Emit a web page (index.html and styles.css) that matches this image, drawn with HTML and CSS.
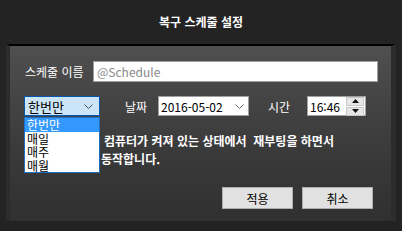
FILE: index.html
```html
<!DOCTYPE html>
<html lang="ko">
<head>
  <meta charset="UTF-8">
  <title>복구 스케줄 설정</title>
  <link rel="stylesheet" href="styles.css">
</head>
<body>
  <div class="window">
    <div class="title">복구 스케줄 설정</div>

    <div class="panel">
      <div class="row name-row">
        <label class="name-label">스케줄 이름</label>
        <div class="text-input">@Schedule</div>
      </div>

      <div class="row when-row">
        <div class="select">
          <span>한번만</span>
          <svg class="chev" width="9" height="5" viewBox="0 0 9 5"><path d="M0.5 0.5 L4.5 4.5 L8.5 0.5" fill="none" stroke="#555" stroke-width="1"/></svg>
        </div>
        <label class="date-label">날짜</label>
        <div class="date-input">
          <span>2016-05-02</span>
          <svg class="chev" width="9" height="5" viewBox="0 0 9 5"><path d="M0.5 0.5 L4.5 4.5 L8.5 0.5" fill="none" stroke="#666" stroke-width="1"/></svg>
        </div>
        <label class="time-label">시간</label>
        <div class="time-input">
          <span>16:46</span>
          <div class="spin">
            <div class="spin-btn"><svg width="7" height="4" viewBox="0 0 7 4"><path d="M0 4 L3.5 0 L7 4 Z" fill="#111"/></svg></div>
            <div class="spin-btn"><svg width="7" height="4" viewBox="0 0 7 4"><path d="M0 0 L3.5 4 L7 0 Z" fill="#111"/></svg></div>
          </div>
        </div>

        <ul class="dropdown">
          <li class="selected">한번만</li>
          <li>매일</li>
          <li>매주</li>
          <li>매월</li>
        </ul>
      </div>

      <div class="notice">
        <div class="line1">컴퓨터가 켜져 있는 상태에서&nbsp; 재부팅을 하면서</div>
        <div class="line2">동작합니다.</div>
      </div>

      <div class="buttons">
        <button class="btn">적용</button>
        <button class="btn">취소</button>
      </div>
    </div>
  </div>
</body>
</html>
```
FILE: styles.css
```css
body {
  margin: 0;
  width: 402px;
  height: 231px;
  background: #232323;
  color: white;
  font-family: "Noto Sans CJK KR", "Noto Sans", sans-serif;
  font-size: 12px;
  overflow: hidden;
}

.window {
  padding: 0 6px;
}

.title {
  height: 44px;
  line-height: 44px;
  text-align: center;
  font-weight: bold;
  font-size: 12px;
}

.panel {
  box-sizing: border-box;
  height: 177px;
  border-top: 2px solid #000;
  border-left: 4px solid #2c2c2c;
  border-right: 5px solid #2c2c2c;
  background: linear-gradient(180deg, #4f4f4f, #3a3a3a 60%, #303030);
  padding: 15px 12px 0 14px;
}

.row {
  display: flex;
  align-items: center;
}

.name-row {
  height: 21px;
}

.name-label {
  flex-shrink: 0;
  width: 68px;
  padding-left: 1px;
}

.text-input {
  flex-shrink: 0;
  width: 285px;
  height: 21px;
  box-sizing: border-box;
  background: white;
  border: 1px solid #a0a0a0;
  color: #8a8a8a;
  padding-left: 3px;
  line-height: 19px;
}

.when-row {
  position: relative;
  height: 20px;
  margin-top: 14px;
}

.select {
  width: 76px;
  height: 20px;
  box-sizing: border-box;
  background: #cce4f7;
  border: 1px solid #0058b0;
  color: #000;
  display: flex;
  align-items: center;
  justify-content: space-between;
  padding: 0 6px 0 3px;
  font-size: 13px;
}

.date-label {
  margin-left: 25px;
  width: 33px;
}

.date-input {
  width: 91px;
  height: 20px;
  box-sizing: border-box;
  background: white;
  border: 1px solid #a0a0a0;
  color: #000;
  display: flex;
  align-items: center;
  justify-content: space-between;
  padding: 0 4px 0 2px;
}

.time-label {
  margin-left: 19px;
  width: 39px;
}

.time-input {
  width: 59px;
  height: 20px;
  box-sizing: border-box;
  background: white;
  border: 1px solid #a0a0a0;
  color: #000;
  display: flex;
  align-items: center;
  justify-content: space-between;
  padding: 0 1px 0 2px;
}

.spin {
  display: flex;
  flex-direction: column;
  gap: 1px;
}

.spin-btn {
  width: 16px;
  height: 7px;
  background: #e6e6e6;
  border: 1px solid #c8c8c8;
  display: flex;
  align-items: center;
  justify-content: center;
}

.dropdown {
  position: absolute;
  top: 21px;
  left: 0;
  z-index: 2;
  width: 76px;
  margin: 0;
  padding: 0;
  list-style: none;
  background: white;
  border: 1px solid #1e6fc8;
  box-sizing: border-box;
  color: #000;
}

.dropdown li {
  height: 13.5px;
  line-height: 13.5px;
  padding-left: 2px;
  font-size: 12px;
}

.dropdown li.selected {
  background: #3399ff;
  color: white;
}

.notice {
  margin-top: 16px;
  font-weight: bold;
  line-height: 18px;
}

.line1 {
  padding-left: 80px;
}

.line2 {
  padding-left: 77px;
}

.buttons {
  display: flex;
  justify-content: flex-end;
  gap: 9px;
  margin: 19px 6px 0 0;
}

.btn {
  width: 71px;
  height: 22px;
  background: #e1e1e1;
  border: 1px solid #adadad;
  font-family: inherit;
  font-size: 12px;
  color: #000;
  padding: 0;
}
```
